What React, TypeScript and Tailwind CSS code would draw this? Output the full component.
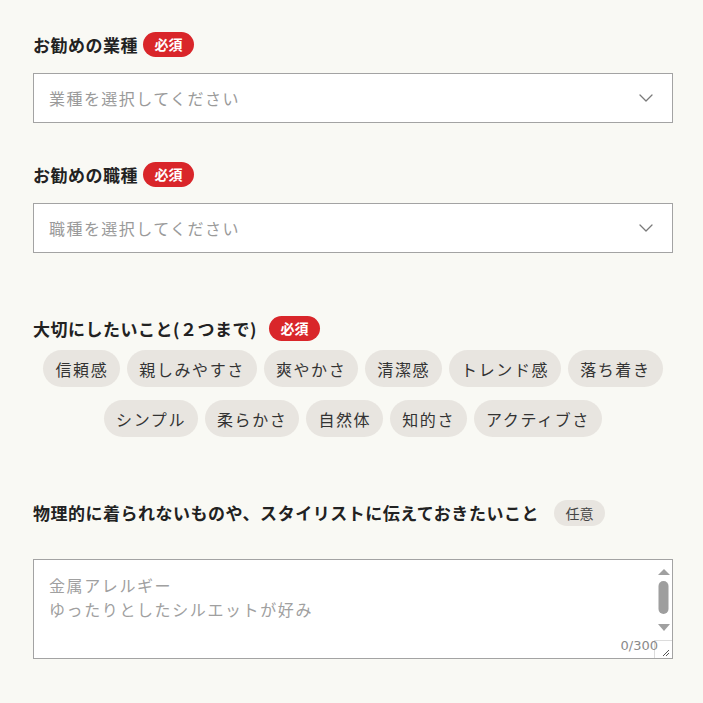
import { ChevronDown } from "lucide-react";

const tags = [
  "信頼感",
  "親しみやすさ",
  "爽やかさ",
  "清潔感",
  "トレンド感",
  "落ち着き",
  "シンプル",
  "柔らかさ",
  "自然体",
  "知的さ",
  "アクティブさ",
];

function Required() {
  return (
    <span className="inline-flex items-center justify-center h-[25px] w-[51px] rounded-full bg-[#d9262a] text-white text-[14px] font-bold">
      必須
    </span>
  );
}

function SelectBox({ placeholder }: { placeholder: string }) {
  return (
    <div className="relative h-[50px] bg-white border border-[#a3a3a3]">
      <select
        defaultValue=""
        className="w-full h-full appearance-none bg-transparent pl-[15px] pr-10 text-[16px] tracking-[0.09em] text-[#9a9a9a] outline-none"
      >
        <option value="" disabled>
          {placeholder}
        </option>
      </select>
      <ChevronDown
        size={24}
        strokeWidth={1.3}
        className="absolute right-[14px] top-1/2 -translate-y-1/2 text-[#7a7a7a] pointer-events-none"
      />
    </div>
  );
}

// textarea scrollbar + corner, drawn over the box
function FakeScrollbar() {
  return (
    <div className="absolute right-[1px] top-[1px] bottom-[1px] w-[16px] pointer-events-none">
      <svg width="16" height="80" viewBox="0 0 16 80" className="block">
        <polygon points="2,15 8,9 14,15" fill="#a0a0a0" />
        <rect x="2.5" y="21" width="10" height="33" rx="5" fill="#9e9e9e" />
        <polygon points="2,64 8,71 14,64" fill="#a0a0a0" />
      </svg>
      <div className="absolute -left-[2px] right-0 bottom-0 h-[18px] border-t border-l border-[#dcdcdc] bg-white">
        <svg width="18" height="18" viewBox="0 0 18 18" className="block">
          <line x1="8" y1="15" x2="14" y2="9" stroke="#555" strokeWidth="1" />
          <line x1="11" y1="15" x2="14" y2="12" stroke="#555" strokeWidth="1" />
        </svg>
      </div>
    </div>
  );
}

export default function App() {
  return (
    <div
      className="min-h-screen bg-[#f9f9f4] pl-[33px] pr-[30px] pt-[32px] pb-10 text-[#222]"
      style={{ fontFamily: '"Noto Sans CJK JP", "Noto Sans", sans-serif' }}
    >
      {/* 業種 */}
      <div className="flex items-center gap-[5px] h-[25px]">
        <span className="text-[17px] font-bold tracking-[0.03em]">お勧めの業種</span>
        <Required />
      </div>
      <div className="mt-[16px]">
        <SelectBox placeholder="業種を選択してください" />
      </div>

      {/* 職種 */}
      <div className="flex items-center gap-[5px] h-[25px] mt-[39px]">
        <span className="text-[17px] font-bold tracking-[0.03em]">お勧めの職種</span>
        <Required />
      </div>
      <div className="mt-[16px]">
        <SelectBox placeholder="職種を選択してください" />
      </div>

      {/* 大切にしたいこと */}
      <div className="flex items-center gap-[12px] h-[25px] mt-[63px]">
        <span className="text-[17px] font-bold tracking-[0.03em]">大切にしたいこと(２つまで)</span>
        <Required />
      </div>
      <div className="mt-[9px] flex flex-wrap justify-center gap-x-[7px] gap-y-[13px]">
        {tags.map((t) => (
          <button
            key={t}
            className="h-[37px] px-[12px] rounded-full bg-[#e8e5e0] text-[16px] tracking-[0.1em] text-[#333]"
          >
            {t}
          </button>
        ))}
      </div>

      {/* 任意 */}
      <div className="flex items-center gap-[15px] h-[26px] mt-[63px]">
        <span className="text-[17px] font-bold tracking-[0.03em]">
          物理的に着られないものや、スタイリストに伝えておきたいこと
        </span>
        <span className="inline-flex items-center justify-center h-[26px] w-[51px] rounded-full bg-[#e8e5e0] text-[14px] text-[#444]">
          任意
        </span>
      </div>
      <div className="relative mt-[33px]">
        <textarea
          placeholder={"金属アレルギー\nゆったりとしたシルエットが好み"}
          className="block w-full h-[100px] resize-none bg-white border border-[#a3a3a3] pl-[15px] pr-[20px] pt-[13px] text-[16px] leading-[24px] tracking-[0.09em] placeholder:tracking-[0.1em] text-[#333] placeholder:text-[#a0a0a0] outline-none"
        />
        <FakeScrollbar />
        <span className="absolute right-[15px] bottom-[4px] text-[13px] text-[#8a8a8a] font-['DejaVu_Sans'] pointer-events-none">
          0/300
        </span>
      </div>
    </div>
  );
}
